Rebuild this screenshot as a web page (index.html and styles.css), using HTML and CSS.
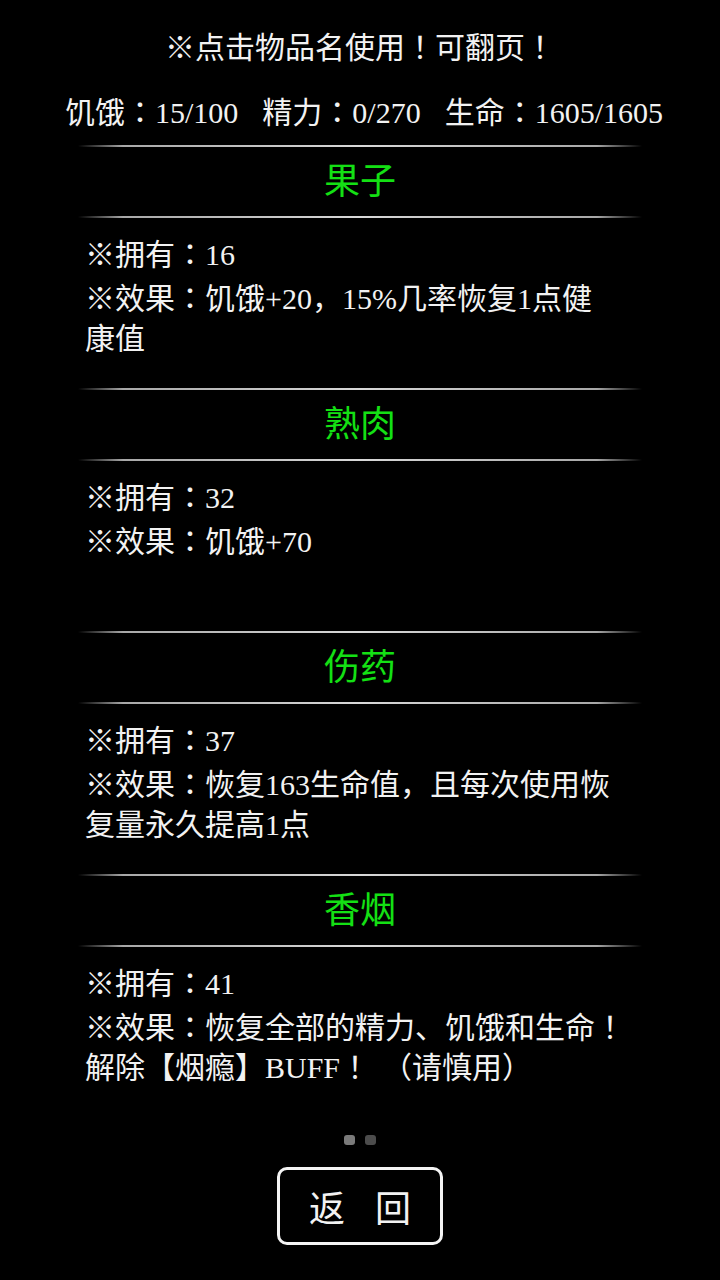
FILE: index.html
```html
<!DOCTYPE html>
<html lang="zh-CN">
<head>
<meta charset="utf-8">
<title>物品</title>
<link rel="stylesheet" href="styles.css">
</head>
<body>
<div class="screen">
  <div class="tip">※点击物品名使用<span class="pc" lang="ja">！</span>可翻页<span class="pc" lang="ja">！</span></div>
  <div class="stats"><span>饥饿<span class="pc" lang="ja">：</span>15/100</span><span>精力<span class="pc" lang="ja">：</span>0/270</span><span>生命<span class="pc" lang="ja">：</span>1605/1605</span></div>
  <div class="list">
    <section class="item">
      <div class="rule"></div>
      <div class="name">果子</div>
      <div class="rule"></div>
      <div class="body">
        <p>※拥有<span class="pc" lang="ja">：</span>16</p>
        <p>※效果<span class="pc" lang="ja">：</span>饥饿+20，15%几率恢复1点健<br>康值</p>
      </div>
    </section>
    <section class="item">
      <div class="rule"></div>
      <div class="name">熟肉</div>
      <div class="rule"></div>
      <div class="body">
        <p>※拥有<span class="pc" lang="ja">：</span>32</p>
        <p>※效果<span class="pc" lang="ja">：</span>饥饿+70</p>
      </div>
    </section>
    <section class="item">
      <div class="rule"></div>
      <div class="name">伤药</div>
      <div class="rule"></div>
      <div class="body">
        <p>※拥有<span class="pc" lang="ja">：</span>37</p>
        <p>※效果<span class="pc" lang="ja">：</span>恢复163生命值，且每次使用恢<br>复量永久提高1点</p>
      </div>
    </section>
    <section class="item">
      <div class="rule"></div>
      <div class="name">香烟</div>
      <div class="rule"></div>
      <div class="body">
        <p>※拥有<span class="pc" lang="ja">：</span>41</p>
        <p>※效果<span class="pc" lang="ja">：</span>恢复全部的精力、饥饿和生命<span class="pc" lang="ja">！</span><br>解除【烟瘾】BUFF<span class="pc" lang="ja">！</span><span class="pc gap" lang="ja">（</span>请慎用）</p>
      </div>
    </section>
  </div>
  <div class="pager"><span class="dot on"></span><span class="dot"></span></div>
  <button class="back"><span>返</span><span>回</span></button>
</div>
</body>
</html>
```

FILE: styles.css
```css
html, body {
  margin: 0;
  padding: 0;
  background: #000;
}
body {
  width: 720px;
  height: 1280px;
  overflow: hidden;
  color: #f2f2f2;
  font-family: "Liberation Serif", "Noto Sans CJK SC", serif;
  font-size: 30px;
  text-spacing-trim: space-all;
}
.pc {
  font-family: "Noto Sans CJK JP", "Noto Sans CJK SC", sans-serif;
  line-height: 0;
}
.gap {
  margin-left: 12px;
}
.screen {
  display: flex;
  flex-direction: column;
  align-items: center;
}
.tip {
  padding-top: 28px;
  line-height: 40px;
  height: 40px;
  text-align: center;
}
.stats {
  margin-top: 25px;
  line-height: 40px;
  height: 40px;
  display: flex;
  gap: 24px;
  padding-left: 8px;
  white-space: nowrap;
}
.list {
  margin-top: 12px;
  width: 564px;
  display: flex;
  flex-direction: column;
}
.item {
  display: flex;
  flex-direction: column;
}
.rule {
  height: 2px;
  background: linear-gradient(to right, rgba(200,200,200,0) 0%, #a8a8a8 8%, #d8d8d8 50%, #a8a8a8 92%, rgba(200,200,200,0) 100%);
}
.name {
  height: 69px;
  line-height: 71px;
  text-align: center;
  font-size: 36px;
  color: #14e014;
}
.body {
  height: 170px;
  padding: 17px 0 0 7px;
  box-sizing: border-box;
}
.body p {
  margin: 0;
  line-height: 40px;
  white-space: nowrap;
}
.body p + p {
  margin-top: 4px;
}
.pager {
  margin-top: 18px;
  display: flex;
  gap: 10px;
}
.dot {
  width: 11px;
  height: 10px;
  border-radius: 3px;
  background: #4c4c4c;
}
.dot.on {
  background: #7a7a7a;
}
.back {
  margin-top: 22px;
  width: 166px;
  height: 78px;
  border: 3px solid #f4f4f4;
  border-radius: 10px;
  background: #000;
  color: #f2f2f2;
  font-family: "Liberation Serif", "Noto Sans CJK SC", serif;
  font-size: 36px;
  padding: 0;
  display: flex;
  justify-content: center;
  align-items: center;
  gap: 30px;
}
```
